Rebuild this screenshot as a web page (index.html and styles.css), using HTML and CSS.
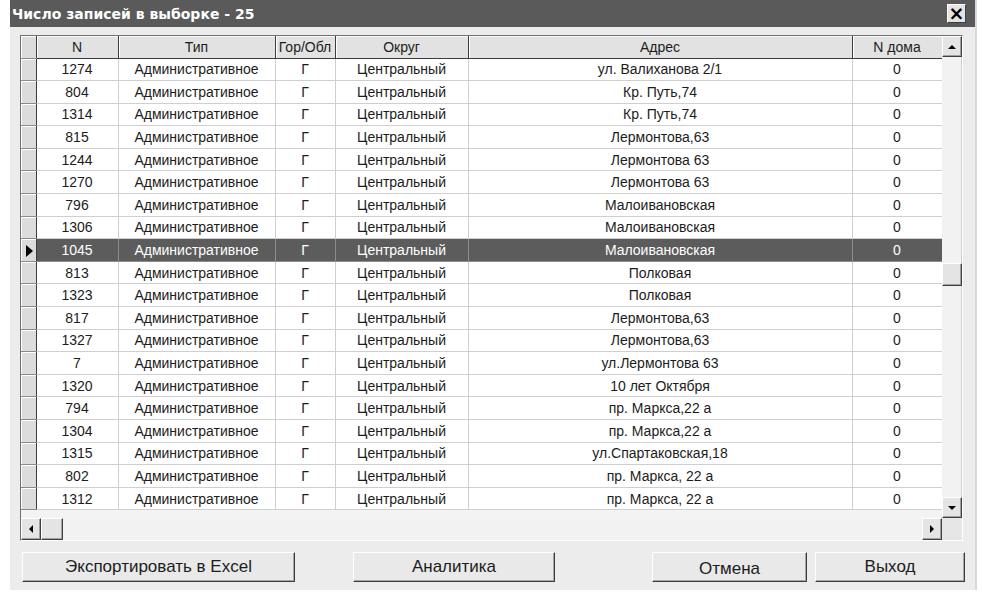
FILE: index.html
```html
<!DOCTYPE html>
<html lang="ru">
<head>
<meta charset="utf-8">
<title>Число записей в выборке - 25</title>
<link rel="stylesheet" href="styles.css">
</head>
<body>
<div class="window">
  <div class="titlebar">
    <span class="title">Число записей в выборке - 25</span>
    <span class="close">×</span>
  </div>
  <div class="content">
    <div class="grid">
      <div class="tablearea">
        <table class="data">
          <colgroup>
            <col class="c-ind"><col class="c-n"><col class="c-type"><col class="c-go"><col class="c-okr"><col class="c-addr"><col class="c-dom">
          </colgroup>
          <thead>
            <tr><th class="ind"></th><th>N</th><th>Тип</th><th>Гор/Обл</th><th>Округ</th><th>Адрес</th><th>N дома</th></tr>
          </thead>
          <tbody>
            <tr><td class="ind"></td><td>1274</td><td>Административное</td><td>Г</td><td>Центральный</td><td>ул. Валиханова 2/1</td><td>0</td></tr>
            <tr><td class="ind"></td><td>804</td><td>Административное</td><td>Г</td><td>Центральный</td><td>Кр. Путь,74</td><td>0</td></tr>
            <tr><td class="ind"></td><td>1314</td><td>Административное</td><td>Г</td><td>Центральный</td><td>Кр. Путь,74</td><td>0</td></tr>
            <tr><td class="ind"></td><td>815</td><td>Административное</td><td>Г</td><td>Центральный</td><td>Лермонтова,63</td><td>0</td></tr>
            <tr><td class="ind"></td><td>1244</td><td>Административное</td><td>Г</td><td>Центральный</td><td>Лермонтова 63</td><td>0</td></tr>
            <tr><td class="ind"></td><td>1270</td><td>Административное</td><td>Г</td><td>Центральный</td><td>Лермонтова 63</td><td>0</td></tr>
            <tr><td class="ind"></td><td>796</td><td>Административное</td><td>Г</td><td>Центральный</td><td>Малоивановская</td><td>0</td></tr>
            <tr><td class="ind"></td><td>1306</td><td>Административное</td><td>Г</td><td>Центральный</td><td>Малоивановская</td><td>0</td></tr>
            <tr class="sel"><td class="ind"><span class="arrow"></span></td><td>1045</td><td>Административное</td><td>Г</td><td>Центральный</td><td>Малоивановская</td><td>0</td></tr>
            <tr><td class="ind"></td><td>813</td><td>Административное</td><td>Г</td><td>Центральный</td><td>Полковая</td><td>0</td></tr>
            <tr><td class="ind"></td><td>1323</td><td>Административное</td><td>Г</td><td>Центральный</td><td>Полковая</td><td>0</td></tr>
            <tr><td class="ind"></td><td>817</td><td>Административное</td><td>Г</td><td>Центральный</td><td>Лермонтова,63</td><td>0</td></tr>
            <tr><td class="ind"></td><td>1327</td><td>Административное</td><td>Г</td><td>Центральный</td><td>Лермонтова,63</td><td>0</td></tr>
            <tr><td class="ind"></td><td>7</td><td>Административное</td><td>Г</td><td>Центральный</td><td>ул.Лермонтова 63</td><td>0</td></tr>
            <tr><td class="ind"></td><td>1320</td><td>Административное</td><td>Г</td><td>Центральный</td><td>10 лет Октября</td><td>0</td></tr>
            <tr><td class="ind"></td><td>794</td><td>Административное</td><td>Г</td><td>Центральный</td><td>пр. Маркса,22 а</td><td>0</td></tr>
            <tr><td class="ind"></td><td>1304</td><td>Административное</td><td>Г</td><td>Центральный</td><td>пр. Маркса,22 а</td><td>0</td></tr>
            <tr><td class="ind"></td><td>1315</td><td>Административное</td><td>Г</td><td>Центральный</td><td>ул.Спартаковская,18</td><td>0</td></tr>
            <tr><td class="ind"></td><td>802</td><td>Административное</td><td>Г</td><td>Центральный</td><td>пр. Маркса, 22 а</td><td>0</td></tr>
            <tr><td class="ind"></td><td>1312</td><td>Административное</td><td>Г</td><td>Центральный</td><td>пр. Маркса, 22 а</td><td>0</td></tr>
          </tbody>
        </table>
      </div>
      <div class="vscroll">
        <div class="sbtn"><span class="tri up"></span></div>
        <div class="vtrack">
          <div class="vthumb"></div>
        </div>
        <div class="sbtn"><span class="tri down"></span></div>
      </div>
      <div class="hscroll">
        <div class="sbtn h"><span class="tri left"></span></div>
        <div class="hthumb"></div>
        <div class="htrack"></div>
        <div class="sbtn h"><span class="tri right"></span></div>
      </div>
      <div class="corner"></div>
    </div>
    <div class="buttons">
      <button class="btn b-export">Экспортировать в Excel</button>
      <button class="btn b-anal">Аналитика</button>
      <button class="btn b-cancel">Отмена</button>
      <button class="btn b-exit">Выход</button>
    </div>
  </div>
</div>
</body>
</html>
```
FILE: styles.css
```css
* { box-sizing: border-box; }
html, body { margin: 0; padding: 0; background: #ffffff; }
body { width: 983px; height: 594px; overflow: hidden; font-family: "Liberation Sans", Arial, sans-serif; }

.window {
  margin-left: 10px;
  width: 967px;
  height: 590px;
  background: #ececec;
  border-right: 2px solid #d8d8d8;
}

.titlebar {
  height: 27px;
  background: #5a5a5a;
  color: #ffffff;
  display: flex;
  align-items: center;
  justify-content: space-between;
  padding: 0 9px 0 2px;
}
.title {
  font-family: "DejaVu Sans", Verdana, sans-serif;
  font-weight: bold;
  font-size: 14px;
}
.close {
  width: 19px;
  height: 19px;
  background: #e4e4e4;
  color: #000;
  font-family: "DejaVu Sans", sans-serif;
  font-weight: bold;
  font-size: 19px;
  line-height: 17px;
  display: flex;
  align-items: center;
  justify-content: center;
  border: 1px solid;
  border-color: #ffffff #404040 #404040 #ffffff;
}

.content { padding: 8px 0 0 10px; }

.grid {
  width: 943px;
  border: 1px solid;
  border-color: #707070 #ffffff #ffffff #707070;
  display: grid;
  grid-template-columns: 921px 20px;
  grid-template-rows: 482px 22px;
  background: #f3f3f3;
}

.tablearea { overflow: hidden; background: #f3f3f3; }

.data {
  border-collapse: collapse;
  table-layout: fixed;
  width: 921px;
  font-size: 14px;
  color: #1c1c1c;
}
.c-ind { width: 15px; }
.c-n { width: 82px; }
.c-type { width: 157px; }
.c-go { width: 60px; }
.c-okr { width: 133px; }
.c-addr { width: 384px; }
.c-dom { width: 90px; }

.data th {
  height: 22px;
  background: #e2e2e2;
  font-weight: normal;
  text-align: center;
  padding: 0;
  border-right: 1px solid #3c3c3c;
  border-bottom: 1px solid #3c3c3c;
  box-shadow: inset 1px 1px 0 #ffffff;
  white-space: nowrap;
  overflow: hidden;
}
.data th:last-child { border-right: 1px solid #9a9a9a; }

.data td {
  height: 22.6px;
  background: #ffffff;
  text-align: center;
  padding: 0;
  border-right: 1px solid #cfcfcf;
  border-bottom: 1px solid #cfcfcf;
  white-space: nowrap;
  overflow: hidden;
}
.data td.ind, .data th.ind {
  background: #dcdcdc;
  border-right: 1px solid #3c3c3c;
  border-bottom: 1px solid #8a8a8a;
  box-shadow: inset 1px 1px 0 #ffffff;
}

.data tr.sel td { background: #5c5c5c; color: #ffffff; border-right-color: #8c8c8c; border-bottom-color: #8c8c8c; }
.data tr.sel td.ind { background: #dcdcdc; border-right-color: #3c3c3c; border-bottom-color: #8a8a8a; }
.arrow {
  display: inline-block;
  width: 0; height: 0;
  border-top: 6px solid transparent;
  border-bottom: 6px solid transparent;
  border-left: 7px solid #000;
  vertical-align: middle;
  margin-left: 2px;
}

.vscroll {
  display: flex;
  flex-direction: column;
  background: #f2f2f2;
  border-right: 1px solid #d0d0d0;
}
.sbtn {
  width: 20px;
  height: 21px;
  background: #e4e4e4;
  border: 1px solid;
  border-color: #ffffff #404040 #404040 #ffffff;
  box-shadow: inset -1px -1px 0 #a0a0a0;
  display: flex;
  align-items: center;
  justify-content: center;
  flex: none;
}
.sbtn.h { height: 22px; width: 20px; }
.vtrack { flex: 1; }
.vthumb {
  margin-top: 206px;
  width: 20px;
  height: 23px;
  background: #e4e4e4;
  border: 1px solid;
  border-color: #ffffff #404040 #404040 #ffffff;
  box-shadow: inset -1px -1px 0 #a0a0a0;
}
.tri { width: 0; height: 0; display: block; }
.tri.up { border-left: 4px solid transparent; border-right: 4px solid transparent; border-bottom: 4px solid #000; }
.tri.down { border-left: 4px solid transparent; border-right: 4px solid transparent; border-top: 4px solid #000; }
.tri.left { border-top: 4px solid transparent; border-bottom: 4px solid transparent; border-right: 4px solid #000; }
.tri.right { border-top: 4px solid transparent; border-bottom: 4px solid transparent; border-left: 4px solid #000; }

.hscroll {
  display: flex;
  background: #f2f2f2;
}
.hthumb {
  width: 22px;
  height: 22px;
  background: #e4e4e4;
  border: 1px solid;
  border-color: #ffffff #404040 #404040 #ffffff;
  box-shadow: inset -1px -1px 0 #a0a0a0;
}
.htrack { flex: 1; }
.corner { background: #e6e6e6; }

.buttons {
  display: flex;
  margin-top: 11px;
  padding-left: 2px;
}
.btn {
  height: 30px;
  background: #e9e9e9;
  border: 1px solid;
  border-color: #ffffff #3c3c3c #3c3c3c #ffffff;
  box-shadow: inset -1px -1px 0 #a8a8a8;
  font-family: "Liberation Sans", Arial, sans-serif;
  font-size: 17px;
  color: #1c1c1c;
  padding: 0;
  text-align: center;
}
.b-export { width: 273px; }
.b-anal { width: 202px; margin-left: 58px; }
.b-cancel { width: 155px; margin-left: 97px; padding-top: 3px; }
.b-exit { width: 150px; margin-left: 8px; }
```
